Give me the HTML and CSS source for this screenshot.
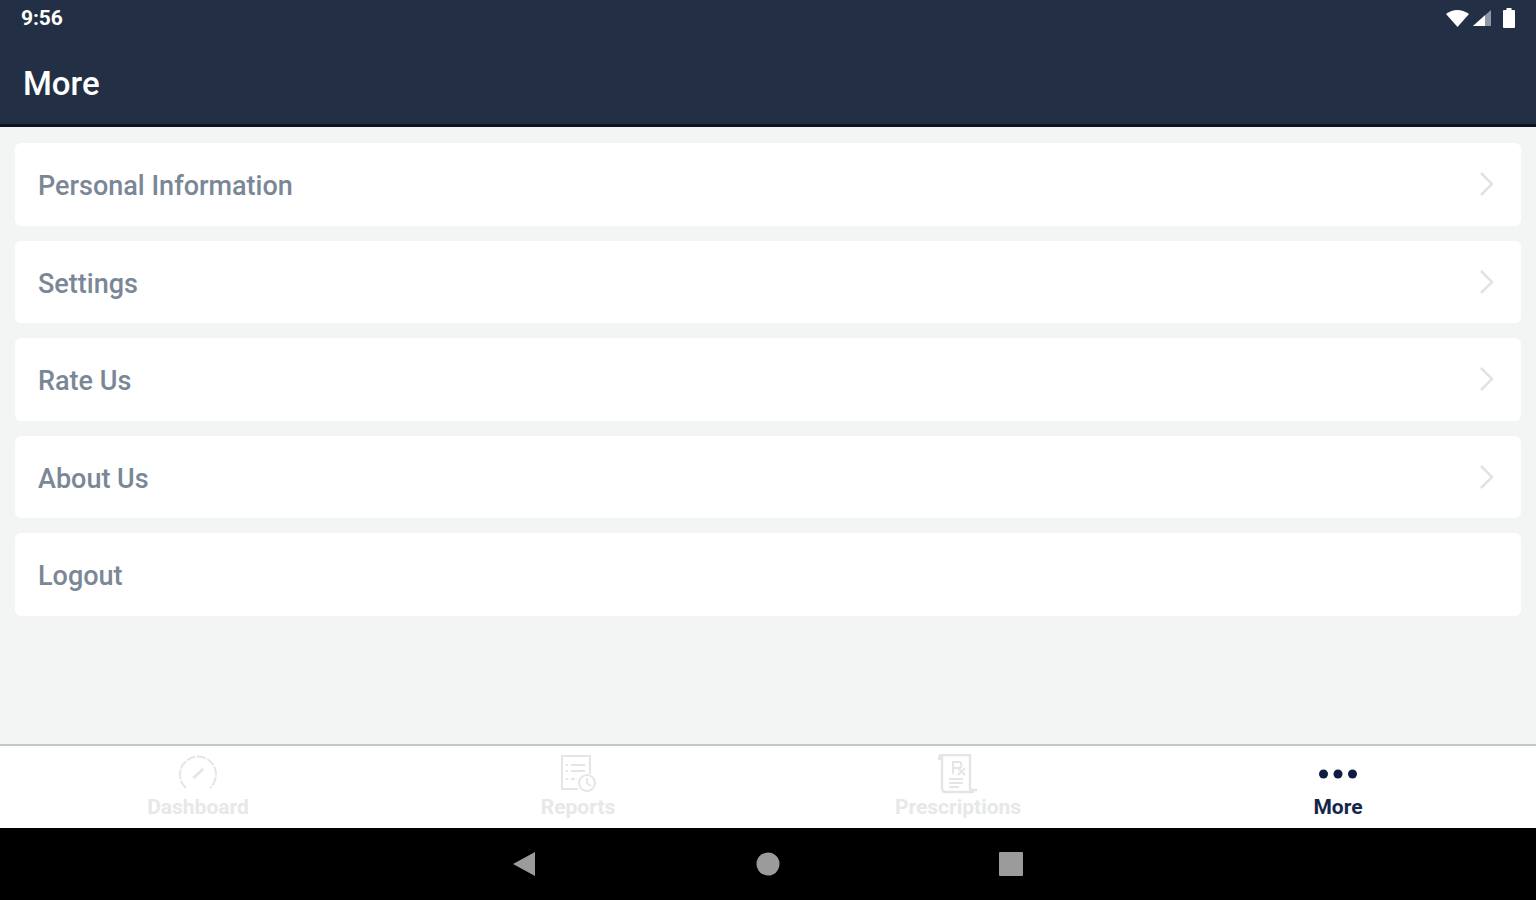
FILE: index.html
```html
<!DOCTYPE html>
<html lang="en">

<head>
    <meta charset="UTF-8">
    <meta name="viewport" content="width=device-width, initial-scale=1.0">
    <title>More</title>
    <link rel="stylesheet" href="styles.css">
</head>

<body>
    <div class="app">
        <header class="topbar">
            <div class="status-bar">
                <span class="time">9:56</span>
                <div class="status-icons">
                    <svg width="26" height="18" viewBox="0 0 26 18"><path d="M1 5 Q12 -3 24 5 L12.500 18 Z" fill="#fff"/></svg>
                    <svg width="20" height="18" viewBox="0 0 20 18"><path d="M1 17 L19 1 V17 Z" fill="#8e98a6"/><path d="M1 17 L13 6.300 V17 Z" fill="#fff"/></svg>
                    <svg class="battery" width="12" height="20" viewBox="0 0 12 20"><path d="M3.500 0 H8.500 V2 H11 Q12 2 12 3 V19 Q12 20 11 20 H1 Q0 20 0 19 V3 Q0 2 1 2 H3.500 Z" fill="#fff"/></svg>
                </div>
            </div>
            <h1 class="page-title">More</h1>
        </header>

        <main class="menu">
            <a class="menu-item">
                <span>Personal Information</span>
                <svg class="chevron" width="16" height="26" viewBox="0 0 16 26"><path d="M2 2 L13 13 L2 24" /></svg>
            </a>
            <a class="menu-item">
                <span>Settings</span>
                <svg class="chevron" width="16" height="26" viewBox="0 0 16 26"><path d="M2 2 L13 13 L2 24" /></svg>
            </a>
            <a class="menu-item">
                <span>Rate Us</span>
                <svg class="chevron" width="16" height="26" viewBox="0 0 16 26"><path d="M2 2 L13 13 L2 24" /></svg>
            </a>
            <a class="menu-item">
                <span>About Us</span>
                <svg class="chevron" width="16" height="26" viewBox="0 0 16 26"><path d="M2 2 L13 13 L2 24" /></svg>
            </a>
            <a class="menu-item">
                <span>Logout</span>
            </a>
        </main>

        <nav class="tabs">
            <div class="tab">
                <svg class="tab-icon" width="40" height="40" viewBox="0 0 40 40">
                    <path d="M8 34 A18 18 0 1 1 32 34" stroke-dasharray="9 1.500" />
                    <path d="M15.500 24 L25 15" stroke-width="3" />
                </svg>
                <span>Dashboard</span>
            </div>
            <div class="tab">
                <svg class="tab-icon" width="40" height="40" viewBox="0 0 40 40">
                    <path d="M20 35 H4 V2 H32 V20" />
                    <path d="M8 11 H10 M13 11 H27 M8 17 H10 M13 17 H27 M8 25 H10 M13 25 H17" />
                    <circle cx="29" cy="29" r="8" />
                    <path d="M29 24 V29 L33 32" />
                </svg>
                <span>Reports</span>
            </div>
            <div class="tab">
                <svg class="tab-icon" width="40" height="40" viewBox="0 0 40 40">
                    <path d="M4 1 H32 V34 Q32 38 36 38 H8 Q4 38 4 34 Z M4 1 Q1 1 1 5 H4 M32 36 H39" stroke-width="2.500" />
                    <path d="M15 8 H22 Q25 11 22 14 H15 Z M15 8 V20 M20 14 L27 21 M27 14 L20 21 M11 25 H25 M11 29 H25 M11 33 H21" />
                </svg>
                <span>Prescriptions</span>
            </div>
            <div class="tab active">
                <svg class="tab-icon" width="40" height="40" viewBox="0 0 40 40">
                    <circle cx="5.500" cy="20" r="4.500" />
                    <circle cx="20" cy="20" r="4.500" />
                    <circle cx="34.500" cy="20" r="4.500" />
                </svg>
                <span>More</span>
            </div>
        </nav>

        <footer class="nav-bar">
            <svg width="24" height="26" viewBox="1 0 24 26"><path d="M23 1 V25 L1 13 Z" /></svg>
            <svg width="24" height="24" viewBox="0 0 24 24"><circle cx="12" cy="12" r="11.500" /></svg>
            <svg width="24" height="24" viewBox="0 0 24 24"><rect width="24" height="24" rx="1" /></svg>
        </footer>
    </div>
</body>

</html>
```

FILE: styles.css
```css
* {
    margin: 0;
    padding: 0;
    box-sizing: border-box;
}

body {
    background: #f3f5f5;
    font-family: Roboto, "Liberation Sans", sans-serif;
}

.app {
    display: flex;
    flex-direction: column;
    height: 900px;
    overflow: hidden;
}

/* Top bar */
.topbar {
    height: 127px;
    flex-shrink: 0;
    background: #232f45;
    border-bottom: 3px solid #0c1424;
    color: #fff;
    padding: 7px 21px 0 21px;
}

.status-bar {
    display: flex;
    justify-content: space-between;
    align-items: center;
    height: 22px;
}

.time {
    font-size: 21px;
    font-weight: 700;
    letter-spacing: -0.1px;
}

.status-icons {
    display: flex;
    align-items: center;
    gap: 1px;
}

.battery {
    margin-left: 10px;
}

.page-title {
    font-size: 33px;
    font-weight: 500;
    line-height: 40px;
    margin: 35px 0 0 2px;
}

/* Menu */
.menu {
    flex: 1;
    display: flex;
    flex-direction: column;
    gap: 15px;
    padding: 16px 15px 0;
}

.menu-item {
    display: flex;
    justify-content: space-between;
    align-items: center;
    height: 82.500px;
    padding: 0 26px 0 23px;
    background: #fff;
    border-radius: 6px;
    font-size: 27px;
    font-weight: 500;
    color: #7a8796;
}

.menu-item span {
    margin-top: 4px;
}

.chevron {
    fill: none;
    stroke: #dfe3e6;
    stroke-width: 2.500;
}

/* Bottom tabs */
.tabs {
    height: 84px;
    flex-shrink: 0;
    display: flex;
    padding: 0 8px;
    background: #fff;
    border-top: 2px solid #c4c8ca;
}

.tab {
    flex: 1;
    display: flex;
    flex-direction: column;
    align-items: center;
    padding-top: 8px;
    font-size: 21px;
    font-weight: 700;
    line-height: 24px;
    color: #e6e8e9;
}

.tab-icon {
    margin-bottom: 1px;
    fill: none;
    stroke: #e3e5e7;
    stroke-width: 2;
}

.tab.active {
    color: #14274a;
}

.tab.active .tab-icon {
    fill: #0e1c42;
    stroke: none;
}

/* Android nav */
.nav-bar {
    height: 72px;
    flex-shrink: 0;
    display: flex;
    justify-content: center;
    align-items: center;
    gap: 219px;
    background: #000;
    fill: #9b9b9b;
}
```
